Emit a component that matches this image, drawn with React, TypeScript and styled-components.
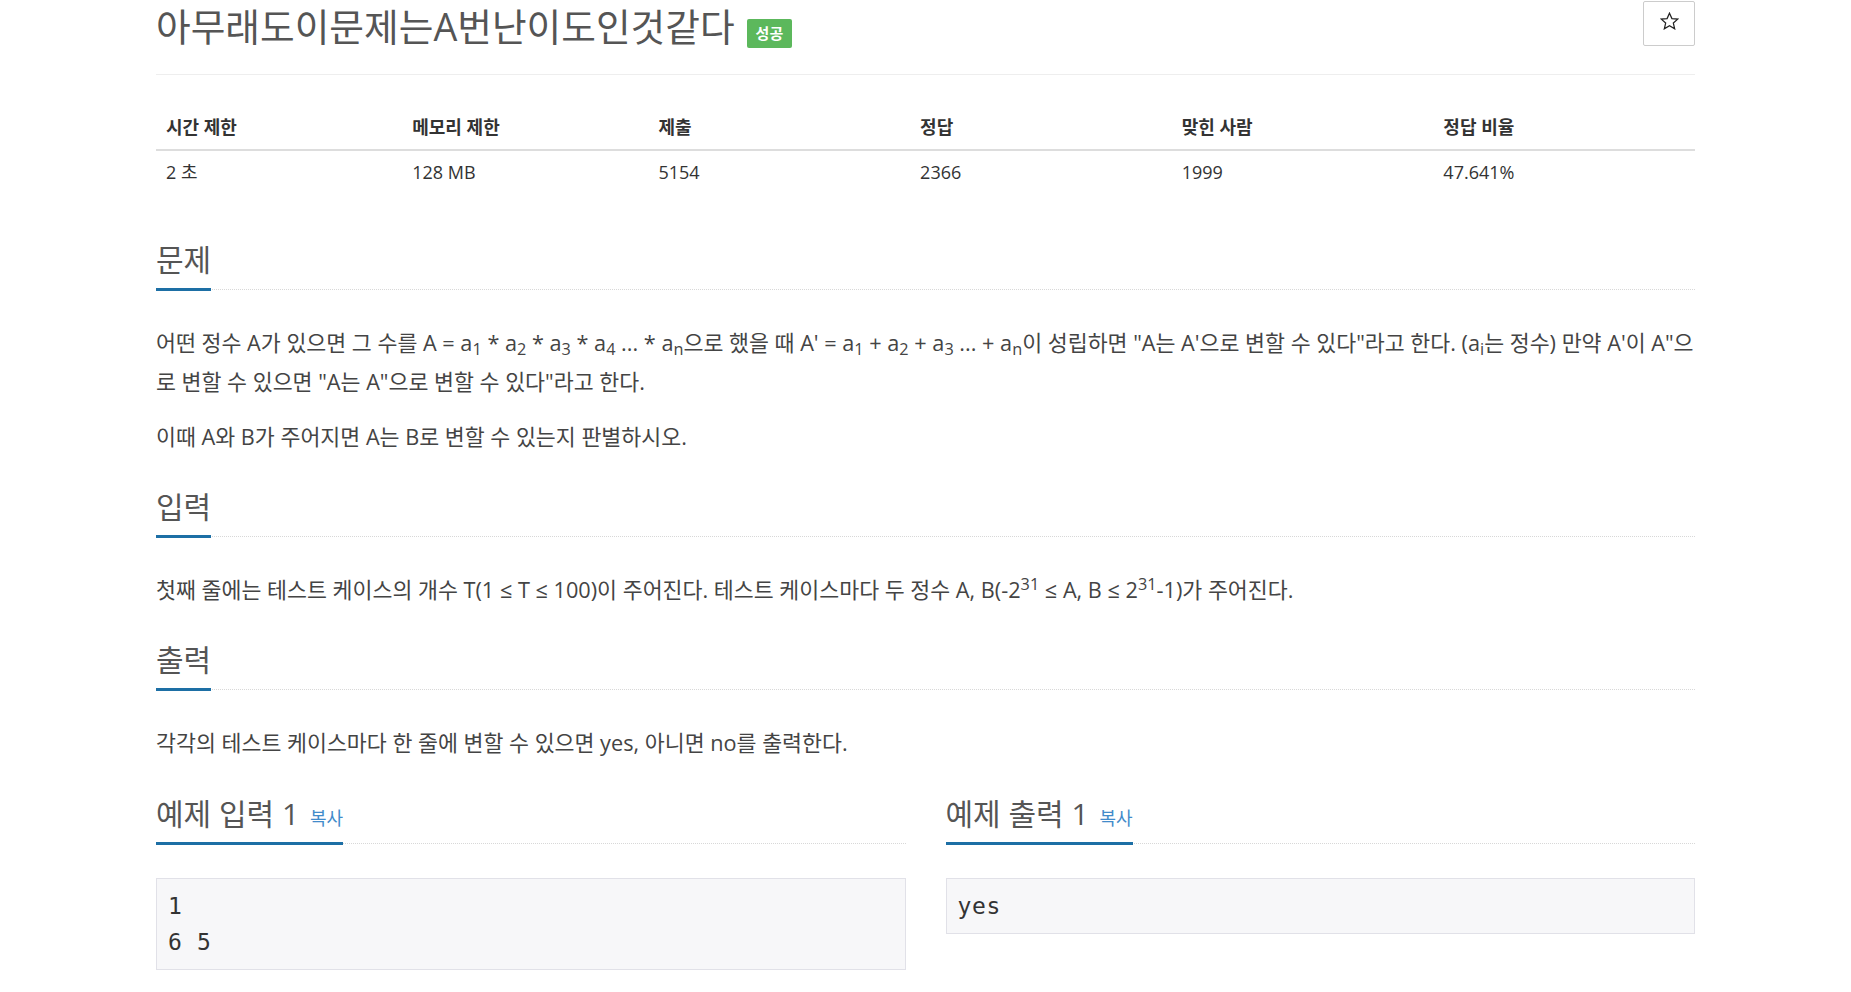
import React from 'react';
import styled, { createGlobalStyle } from 'styled-components';

const GlobalStyle = createGlobalStyle`
  html, body {
    margin: 0;
    padding: 0;
    background: #fff;
  }
  body {
    font-family: "Open Sans", "Noto Sans CJK KR", sans-serif;
    color: #333;
  }
`;

const stats = [
  { label: '시간 제한', value: '2 초', width: 16 },
  { label: '메모리 제한', value: '128 MB', width: 16 },
  { label: '제출', value: '5154', width: 17 },
  { label: '정답', value: '2366', width: 17 },
  { label: '맞힌 사람', value: '1999', width: 17 },
  { label: '정답 비율', value: '47.641%', width: 17 },
];

const StarIcon = () => (
  <svg width="19" height="18" viewBox="0 0 24 23" fill="none">
    <path
      d="M12 1.5l3.1 6.9 7.4.7-5.6 5 1.7 7.4L12 17.6l-6.6 3.9 1.7-7.4-5.6-5 7.4-.7z"
      stroke="#222"
      strokeWidth="1.6"
      strokeLinejoin="miter"
    />
  </svg>
);

const App: React.FC = () => {
  return (
    <>
      <GlobalStyle />
      <Page>
        <Header>
          <Title>
            아무래도이문제는A번난이도인것같다
            <Badge>성공</Badge>
          </Title>
          <StarButton type="button">
            <StarIcon />
          </StarButton>
        </Header>

        <Stats>
          <thead>
            <tr>
              {stats.map((s) => (
                <Th key={s.label} $w={s.width}>
                  {s.label}
                </Th>
              ))}
            </tr>
          </thead>
          <tbody>
            <tr>
              {stats.map((s) => (
                <Td key={s.label}>{s.value}</Td>
              ))}
            </tr>
          </tbody>
        </Stats>

        <Section $first>
          <Headline>
            <HeadTitle>문제</HeadTitle>
          </Headline>
          <Text>
            어떤 정수 A가 있으면 그 수를 A = a<Sub>1</Sub> * a<Sub>2</Sub> * a
            <Sub>3</Sub> * a<Sub>4</Sub> ... * a<Sub>n</Sub>으로 했을 때 A' = a
            <Sub>1</Sub> + a<Sub>2</Sub> + a<Sub>3</Sub> ... + a<Sub>n</Sub>이
            성립하면 "A는 A'으로 변할 수 있다"라고 한다. (a<Sub>i</Sub>는 정수)
            만약 A'이 A"으로 변할 수 있으면 "A는 A"으로 변할 수 있다"라고 한다.
          </Text>
          <Text>이때 A와 B가 주어지면 A는 B로 변할 수 있는지 판별하시오.</Text>
        </Section>

        <Section>
          <Headline>
            <HeadTitle>입력</HeadTitle>
          </Headline>
          <Text>
            첫째 줄에는 테스트 케이스의 개수 T(1 ≤ T ≤ 100)이 주어진다. 테스트
            케이스마다 두 정수 A, B(-2<Sup>31</Sup> ≤ A, B ≤ 2<Sup>31</Sup>-1)가
            주어진다.
          </Text>
        </Section>

        <Section>
          <Headline>
            <HeadTitle>출력</HeadTitle>
          </Headline>
          <Text>각각의 테스트 케이스마다 한 줄에 변할 수 있으면 yes, 아니면 no를 출력한다.</Text>
        </Section>

        <SampleRow>
          <SampleCol>
            <Headline>
              <HeadTitle>
                예제 입력 1 <CopyLink href="#">복사</CopyLink>
              </HeadTitle>
            </Headline>
            <SampleData>{'1\n6 5'}</SampleData>
          </SampleCol>
          <SampleCol>
            <Headline>
              <HeadTitle>
                예제 출력 1 <CopyLink href="#">복사</CopyLink>
              </HeadTitle>
            </Headline>
            <SampleData>yes</SampleData>
          </SampleCol>
        </SampleRow>
      </Page>
    </>
  );
};

export default App;

const Page = styled.div`
  width: 1539px;
  margin: 0 auto;
  display: flex;
  flex-direction: column;
  padding-bottom: 40px;
`;

const Header = styled.div`
  display: flex;
  justify-content: space-between;
  align-items: flex-start;
  padding-bottom: 20px;
  border-bottom: 1px solid #eee;
`;

const Title = styled.h1`
  display: flex;
  align-items: center;
  gap: 12px;
  margin: 0;
  font-size: 37.7px;
  line-height: 54px;
  font-weight: 400;
  color: #555;
`;

const Badge = styled.span`
  display: inline-flex;
  align-items: center;
  height: 29px;
  margin-top: 13px;
  padding: 0 9px;
  background: #5cb85c;
  color: #fff;
  font-size: 15px;
  font-weight: 700;
  line-height: 1;
  border-radius: 2px;
`;

const StarButton = styled.button`
  width: 52px;
  height: 45px;
  margin-top: 1px;
  display: flex;
  align-items: center;
  justify-content: center;
  padding: 0 0 6px;
  background: #fff;
  border: 1px solid #ccc;
  border-radius: 2px;
`;

const Stats = styled.table`
  width: 100%;
  margin-top: 30px;
  border-collapse: collapse;
  font-size: 18px;
  color: #333;
`;

const Th = styled.th<{ $w: number }>`
  width: ${(p) => p.$w}%;
  text-align: left;
  padding: 10px 10px;
  line-height: 24px;
  font-weight: 700;
  border-bottom: 2px solid #ddd;
`;

const Td = styled.td`
  padding: 9px 10px;
  line-height: 24px;
`;

const Section = styled.section<{ $first?: boolean }>`
  display: flex;
  flex-direction: column;
  margin-top: ${(p) => (p.$first ? 49 : 17)}px;
`;

const Headline = styled.div`
  display: flex;
  align-items: flex-end;
  border-bottom: 1px dotted #d8d8d8;
  margin-bottom: 33px;
`;

const HeadTitle = styled.h2`
  margin: 0 0 -2px;
  padding-bottom: 10px;
  border-bottom: 3px solid #1d6fa5;
  font-size: 30px;
  line-height: 36px;
  font-weight: 400;
  color: #555;
  white-space: nowrap;
`;

const CopyLink = styled.a`
  margin-left: 3px;
  font-size: 18px;
  line-height: 1;
  color: #428bca;
  text-decoration: none;
`;

const Text = styled.p`
  margin: 0 0 16px;
  font-size: 21.7px;
  line-height: 39px;
  color: #444;
`;

const Sub = styled.sub`
  position: relative;
  bottom: -0.25em;
  font-size: 75%;
  line-height: 0;
  vertical-align: baseline;
`;

const Sup = styled.sup`
  position: relative;
  top: -0.5em;
  font-size: 75%;
  line-height: 0;
  vertical-align: baseline;
`;

const SampleRow = styled.div`
  display: grid;
  grid-template-columns: 1fr 1fr;
  column-gap: 40px;
  margin-top: 18px;
`;

const SampleCol = styled.div`
  display: flex;
  flex-direction: column;
  min-width: 0;
`;

const SampleData = styled.pre`
  margin: 1px 0 0;
  padding: 9px 11px;
  background: #f7f7f9;
  border: 1px solid #e1e1e8;
  font-family: "DejaVu Sans Mono", "Liberation Mono", monospace;
  font-size: 23px;
  line-height: 36px;
  letter-spacing: 0.6px;
  color: #333;
  white-space: pre-wrap;
`;
